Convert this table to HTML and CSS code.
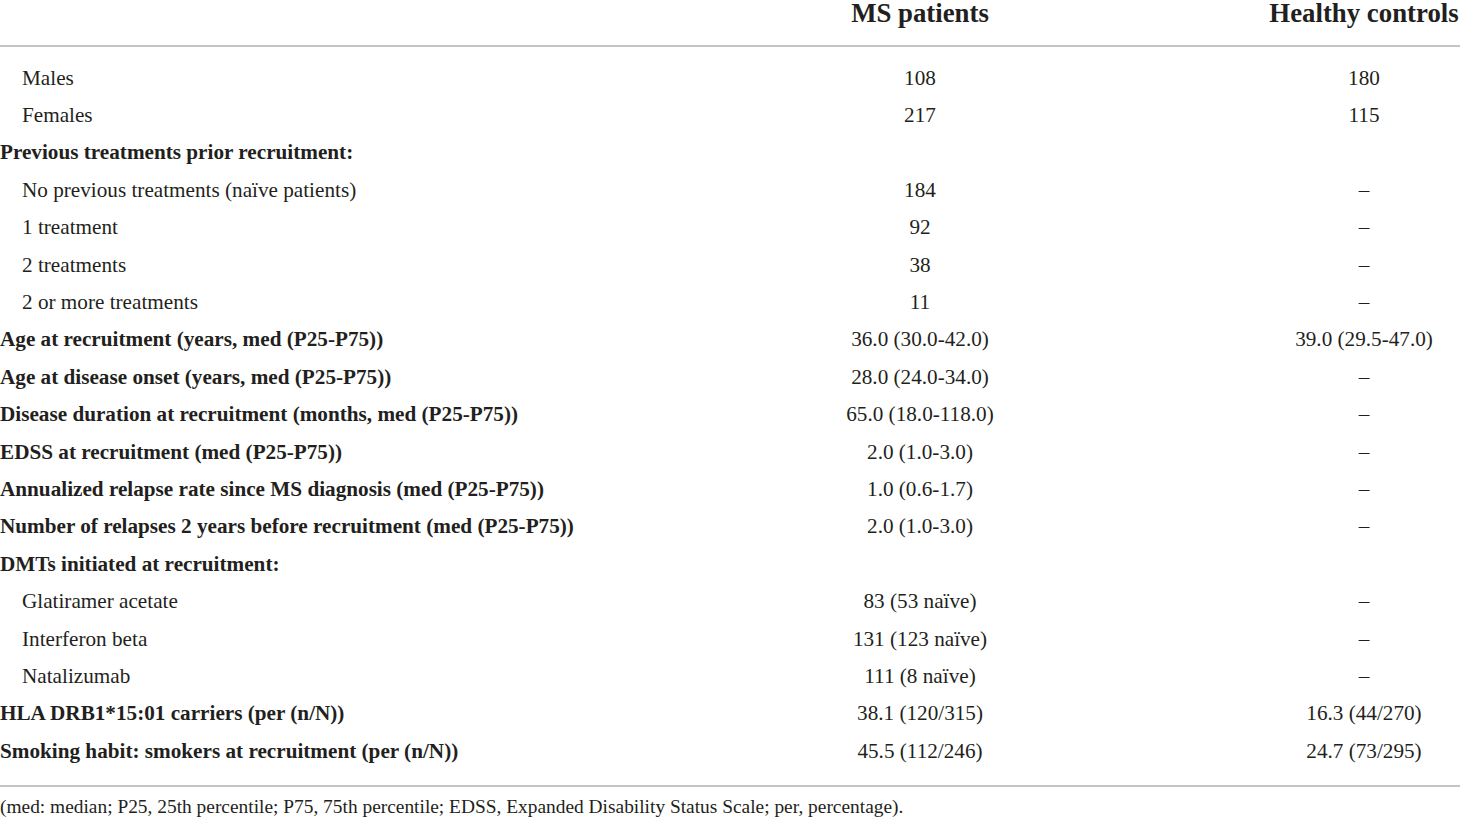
FILE: index.html
```html
<!DOCTYPE html>
<html>
<head>
    <title>Table 1</title>
    <link rel="stylesheet" href="styles.css">
</head>
<body>
    <div class="table-wrap">
        <table class="data-table">
            <colgroup>
                <col class="col-label">
                <col class="col-ms">
                <col class="col-hc">
            </colgroup>
            <thead>
                <tr>
                    <th></th>
                    <th>MS patients</th>
                    <th>Healthy controls</th>
                </tr>
            </thead>
            <tbody>
                <tr class="first"><td class="sub">Males</td><td>108</td><td>180</td></tr>
                <tr><td class="sub">Females</td><td>217</td><td>115</td></tr>
                <tr><td class="head">Previous treatments prior recruitment:</td><td></td><td></td></tr>
                <tr><td class="sub">No previous treatments (naïve patients)</td><td>184</td><td>–</td></tr>
                <tr><td class="sub">1 treatment</td><td>92</td><td>–</td></tr>
                <tr><td class="sub">2 treatments</td><td>38</td><td>–</td></tr>
                <tr><td class="sub">2 or more treatments</td><td>11</td><td>–</td></tr>
                <tr><td class="head">Age at recruitment (years, med (P25-P75))</td><td>36.0 (30.0-42.0)</td><td>39.0 (29.5-47.0)</td></tr>
                <tr><td class="head">Age at disease onset (years, med (P25-P75))</td><td>28.0 (24.0-34.0)</td><td>–</td></tr>
                <tr><td class="head">Disease duration at recruitment (months, med (P25-P75))</td><td>65.0 (18.0-118.0)</td><td>–</td></tr>
                <tr><td class="head">EDSS at recruitment (med (P25-P75))</td><td>2.0 (1.0-3.0)</td><td>–</td></tr>
                <tr><td class="head">Annualized relapse rate since MS diagnosis (med (P25-P75))</td><td>1.0 (0.6-1.7)</td><td>–</td></tr>
                <tr><td class="head">Number of relapses 2 years before recruitment (med (P25-P75))</td><td>2.0 (1.0-3.0)</td><td>–</td></tr>
                <tr><td class="head">DMTs initiated at recruitment:</td><td></td><td></td></tr>
                <tr><td class="sub">Glatiramer acetate</td><td>83 (53 naïve)</td><td>–</td></tr>
                <tr><td class="sub">Interferon beta</td><td>131 (123 naïve)</td><td>–</td></tr>
                <tr><td class="sub">Natalizumab</td><td>111 (8 naïve)</td><td>–</td></tr>
                <tr><td class="head">HLA DRB1*15:01 carriers (per (n/N))</td><td>38.1 (120/315)</td><td>16.3 (44/270)</td></tr>
                <tr class="last"><td class="head">Smoking habit: smokers at recruitment (per (n/N))</td><td>45.5 (112/246)</td><td>24.7 (73/295)</td></tr>
            </tbody>
        </table>
        <p class="footnote">(med: median; P25, 25th percentile; P75, 75th percentile; EDSS, Expanded Disability Status Scale; per, percentage).</p>
    </div>
</body>
</html>
```

FILE: styles.css
```css
body {
    margin: 0;
    background-color: #fff;
    color: #231f20;
    font-family: "Liberation Serif", "Times New Roman", serif;
}

.table-wrap {
    width: 1460px;
}

.data-table {
    width: 1460px;
    border-collapse: collapse;
    table-layout: fixed;
    font-size: 21.2px;
}

.col-label {
    width: 572px;
}

.col-ms {
    width: 696px;
}

.col-hc {
    width: 192px;
}

.data-table th {
    height: 45px;
    padding: 0;
    vertical-align: top;
    font-size: 26.8px;
    font-weight: bold;
    line-height: 26px;
    text-align: center;
    border-bottom: 2px solid #c4c4c4;
    white-space: nowrap;
}

.data-table td {
    height: 37.4px;
    padding: 0;
    text-align: center;
    vertical-align: middle;
    white-space: nowrap;
    line-height: 24px;
}

.data-table td.sub {
    text-align: left;
    padding-left: 22px;
}

.data-table td.head {
    text-align: left;
    font-weight: bold;
}

.data-table tr.first td {
    padding-top: 12px;
}

.data-table tr.last td {
    padding-bottom: 16px;
    border-bottom: 2px solid #c4c4c4;
}

.footnote {
    margin: 0;
    padding-top: 10px;
    font-size: 19.4px;
    line-height: 20px;
}
```
